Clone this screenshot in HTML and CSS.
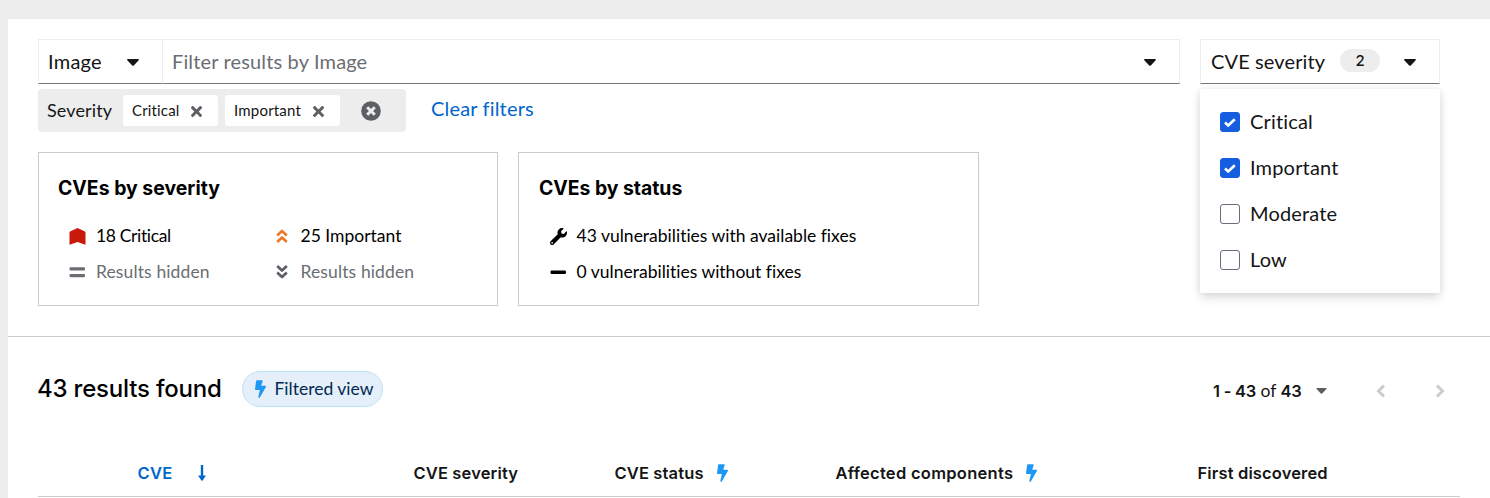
FILE: index.html
```html
<!DOCTYPE html>
<html lang="en">
<head>
<meta charset="utf-8">
<title>Vulnerability results</title>
<link rel="stylesheet" href="styles.css">
</head>
<body>
<svg class="defs" aria-hidden="true">
  <symbol id="caret" viewBox="0 0 12 7"><path d="M.9 0h10.2c.8 0 1.1.8.6 1.3L6.8 6.4c-.5.5-1.1.5-1.6 0L.3 1.3C-.2.8.1 0 .9 0z"/></symbol>
  <symbol id="times" viewBox="0 0 352 352"><path d="M243 176 343 76c12-12 12-32 0-44l-22-22c-12-12-32-12-44 0L176 109 76 10C64-3 44-3 32 10L9 32c-12 12-12 32 0 44l100 100L9 276c-12 12-12 32 0 44l23 23c12 12 32 12 44 0l100-100 101 100c12 12 32 12 44 0l22-23c12-12 12-32 0-44z"/></symbol>
  <symbol id="bolt" viewBox="0 0 320 512"><path d="M296 160H180.600l42.600-129.800C227.200 15 215.700 0 200 0H56C44 0 33.800 8.900 32.200 20.800l-32 240C-1.700 275.200 9.500 288 24 288h118.700L96.600 482.500c-3.600 15.200 8 29.500 23.300 29.500 8.400 0 16.400-4.400 20.800-12l176-304c9.300-15.900-2.200-36-20.700-36z"/></symbol>
  <symbol id="angles" viewBox="0 0 12 14"><path d="M1.200 6.500 6 2l4.800 4.500M1.200 12.900 6 8.400l4.800 4.500" fill="none" stroke="currentColor" stroke-width="2.700" stroke-linejoin="round"/></symbol>
  <symbol id="check" viewBox="0 0 12 9"><path d="m1 4.500 3.200 3 6.600-6.200" fill="none" stroke="currentColor" stroke-width="2.600"/></symbol>
</svg>
<main class="page">
  <section class="filters">
    <div class="toolbar">
      <div class="search">
        <div class="attribute"><span>Image</span><svg class="caret"><use href="#caret"/></svg></div>
        <div class="query"><span>Filter results by Image</span><svg class="caret"><use href="#caret"/></svg></div>
      </div>
      <div class="select">
        <span class="select-label">CVE severity</span><span class="badge">2</span><svg class="caret"><use href="#caret"/></svg>
        <div class="menu">
          <label class="option"><span class="box checked"><svg><use href="#check"/></svg></span><span class="option-text">Critical</span></label>
          <label class="option"><span class="box checked"><svg><use href="#check"/></svg></span><span class="option-text">Important</span></label>
          <label class="option"><span class="box"></span><span class="option-text">Moderate</span></label>
          <label class="option"><span class="box"></span><span class="option-text">Low</span></label>
        </div>
      </div>
    </div>
    <div class="applied">
      <div class="chip-group">
        <span class="group-label">Severity</span>
        <span class="chip chip-critical">Critical<svg><use href="#times"/></svg></span>
        <span class="chip chip-important">Important<svg><use href="#times"/></svg></span>
        <svg class="clear-group" viewBox="0 0 20 20"><circle cx="10" cy="10" r="9.800" fill="#5c5f63"/><path d="m6.200 6.200 7.600 7.600m0-7.600-7.600 7.600" stroke="#ededed" stroke-width="3"/></svg>
      </div>
      <a class="clear">Clear filters</a>
    </div>
    <div class="cards">
      <div class="card">
        <h2 class="card-title title-severity">CVEs by severity</h2>
        <div class="grid">
          <div class="item critical"><svg class="icon" viewBox="0 0 17 17"><path fill="#c9190b" d="M8.500 0 16 3.400q.5.300.5.900V16q0 .900-.900.600L8.500 13.900l-7.100 2.700q-.900.300-.900-.600V4.300q0-.600.500-.900z"/></svg><span>18 Critical</span></div>
          <div class="item"><svg class="icon angles orange"><use href="#angles"/></svg><span>25 Important</span></div>
          <div class="item muted"><svg class="icon" viewBox="0 0 17 17"><path fill="#6a6e73" d="M1.600 3.300h13.300q1.100 0 1.100 1.100v1q0 1.100-1.100 1.100H1.600Q.5 6.500.5 5.400v-1q0-1.100 1.100-1.100zm0 6.700h13.300q1.100 0 1.100 1.100v1q0 1.100-1.100 1.100H1.600q-1.100 0-1.100-1.100v-1q0-1.100 1.100-1.100z"/></svg><span>Results hidden</span></div>
          <div class="item muted"><svg class="icon angles down"><use href="#angles"/></svg><span>Results hidden</span></div>
        </div>
      </div>
      <div class="card card-status">
        <h2 class="card-title title-status">CVEs by status</h2>
        <div class="list">
          <div class="item"><svg class="icon" viewBox="0 0 512 512"><path d="M507.700 109.100c-2.200-9-13.500-12.100-20.100-5.500l-74.400 74.400-67.900-11.300L334 98.900l74.400-74.400c6.600-6.600 3.400-17.900-5.700-20.200-47.400-11.700-99.600.900-136.600 37.900-39.600 39.600-50.500 97.100-34.100 147.200L18.700 402.800c-25 25-25 65.500 0 90.500s65.500 25 90.500 0l213.200-213.200c50.100 16.700 107.500 5.700 147.400-34.200 37.100-37.100 49.700-89.300 37.900-136.800zM64 472c-13.300 0-24-10.700-24-24 0-13.300 10.700-24 24-24s24 10.700 24 24c0 13.300-10.700 24-24 24z"/></svg><span>43 vulnerabilities with available fixes</span></div>
          <div class="item"><svg class="icon" viewBox="0 0 17 17"><rect x=".5" y="6.500" width="15.500" height="3.400" rx="1.200"/></svg><span>0 vulnerabilities without fixes</span></div>
        </div>
      </div>
    </div>
  </section>
  <section class="results">
    <div class="results-bar">
      <h1 class="results-title">43 results found</h1>
      <span class="label"><svg class="bolt"><use href="#bolt"/></svg>Filtered view</span>
      <div class="pager">
        <span class="range"><b>1 - 43</b> of <b>43</b></span>
        <svg class="pager-caret"><use href="#caret"/></svg>
        <svg class="arrow" viewBox="0 0 10 14"><path d="M8 1.500 2.500 7 8 12.500"/></svg>
        <svg class="arrow" viewBox="0 0 10 14"><path d="M2 1.500 7.500 7 2 12.500"/></svg>
      </div>
    </div>
    <div class="thead">
      <div class="th sorted"><span>CVE</span><svg class="sort" viewBox="0 0 8 16"><path d="M4 0v12" stroke="currentColor" stroke-width="2.400"/><path d="M.6 10.500h6.800q.7 0 .2.600l-3 4.300q-.6.600-1.200 0l-3-4.300q-.500-.600.2-.600z" fill="currentColor"/></svg></div>
      <div class="th"><span>CVE severity</span></div>
      <div class="th"><span>CVE status</span><svg class="bolt"><use href="#bolt"/></svg></div>
      <div class="th th-wide"><span>Affected components</span><svg class="bolt"><use href="#bolt"/></svg></div>
      <div class="th"><span>First discovered</span></div>
    </div>
  </section>
</main>
</body>
</html>
```
FILE: styles.css
```css
* { box-sizing: border-box; }
body { margin: 0; padding: 19px 0 0 8px; height: 498px; overflow: hidden; background: #ededed; color: #151515; font: 400 20px/30px Lato, sans-serif; font-variant-ligatures: none; white-space: nowrap; }
h1, h2 { margin: 0; }
svg { display: block; flex: none; overflow: visible; }
.defs { position: absolute; width: 0; height: 0; }
.page { height: 479px; background: #fff; }
.filters { height: 318px; padding: 20px 50px 0 30px; border-bottom: 1px solid #c9cbcd; }
.toolbar { display: flex; justify-content: space-between; height: 45px; }
.search { display: flex; width: 1142px; }
.attribute, .query, .select { display: flex; align-items: center; border: 1px solid #ededed; border-bottom-color: #76797c; }
.attribute span, .query span, .select-label, .option-text { padding-bottom: 2px; }
.attribute { width: 125px; padding-left: 9px; gap: 25px; letter-spacing: .25px; }
.query { flex: 1; justify-content: space-between; padding: 0 23px 0 9px; border-left: 0; color: #6a6e73; letter-spacing: .15px; }
.caret { width: 12px; height: 7px; margin-top: 2px; fill: #151515; }
.select { position: relative; width: 240px; padding-left: 10px; }
.select-label { width: 115px; letter-spacing: .12px; }
.badge { width: 40px; height: 23px; margin: 0 24px 2px 14px; border-radius: 12px; background: #ededed; font: 500 15px/23px Inter, sans-serif; text-align: center; }
.menu { position: absolute; z-index: 1; top: 49px; left: -1px; width: 240px; height: 204px; padding: 10px 20px; background: #fff; box-shadow: 0 5px 10px rgba(3,3,3,.12), 0 0 7px rgba(3,3,3,.08); }
.option { display: flex; align-items: center; gap: 10px; height: 46px; letter-spacing: .17px; }
.box { display: flex; align-items: center; justify-content: center; width: 20px; height: 20px; border: 1px solid #686b7c; border-radius: 3px; background: #fff; }
.box.checked { border-color: #155ee0; background: #155ee0; color: #fff; }
.box svg { width: 12px; height: 9px; }
.applied { display: flex; gap: 25px; margin-top: 5px; }
.chip-group { display: flex; align-items: center; width: 368px; height: 43px; padding-left: 9px; border-radius: 4px; background: #ededed; }
.group-label { width: 76px; padding-bottom: 2px; font-size: 18px; letter-spacing: .12px; }
.chip { display: flex; align-items: center; justify-content: space-between; height: 31px; padding: 0 16px 2px 9px; border-radius: 3px; background: #fff; font-size: 15px; }
.chip svg { width: 11px; height: 11px; margin-top: 3px; fill: #5c5f63; }
.chip-critical { width: 95px; margin-right: 7px; letter-spacing: .16px; }
.chip-important { width: 115px; letter-spacing: .2px; }
.clear-group { width: 20px; height: 20px; margin-left: 21px; }
.clear { padding-top: 4px; color: #0066cc; letter-spacing: .17px; }
.cards { display: flex; gap: 20px; margin-top: 20px; }
.card { width: 460px; height: 154px; padding: 19px 20px 0 19px; border: 1px solid #c9cbcd; color: #000; }
.card-status { width: 461px; padding-left: 20px; }
.card-title { font: 700 19.400px/32px Inter, sans-serif; }
.title-severity { letter-spacing: .02px; }
.title-status { letter-spacing: -.02px; }
.grid { display: grid; grid-template-columns: 204.500px 1fr; padding: 14px 0 0 11px; }
.list { padding: 14px 0 0 10.600px; }
.item { display: flex; align-items: center; gap: 10px; height: 36px; font-size: 17.500px; }
.critical { letter-spacing: -.35px; }
.muted { color: #6a6e73; letter-spacing: .12px; }
.icon { width: 17px; height: 17px; }
.angles { width: 12px; height: 14px; margin: 0 3px 0 2px; color: #5c5f63; }
.orange { color: #ec7a2c; }
.down { transform: scaleY(-1); }
.results { padding: 0 30px; }
.results-bar { display: flex; align-items: center; height: 104px; }
.results-title { width: 205px; margin-left: -1px; font: 500 24px/36px Inter, sans-serif; letter-spacing: -.2px; color: #000; }
.label { display: flex; align-items: center; gap: 8.500px; width: 141px; height: 36px; padding-left: 12px; border: 1px solid #bee1f4; border-radius: 18px; background: #e4eff9; color: #002952; font-size: 17.500px; }
.bolt { width: 11px; height: 18px; fill: #1f97f4; }
.pager { display: flex; align-items: center; height: 30px; margin: 3px 15.500px 0 auto; font-size: 17.500px; }
.range b { font: 600 16.500px Inter, sans-serif; letter-spacing: -.25px; }
.pager-caret { width: 11px; height: 6px; margin: 0 49px 0 14px; fill: #5c5f63; }
.arrow { width: 10px; height: 14px; fill: none; stroke: #c9cbcd; stroke-width: 3; }
.arrow + .arrow { margin-left: 49px; }
.thead { display: grid; grid-template-columns: 276px 201px 221px 362px 1fr; height: 56px; padding-left: 99.500px; border-bottom: 1px solid #c9cbcd; font: 600 16.500px/24px Inter, sans-serif; letter-spacing: .14px; }
.th { display: flex; align-items: center; gap: 13px; padding-top: 9px; }
.th-wide { letter-spacing: .28px; }
.sorted { gap: 25.500px; letter-spacing: .3px; color: #0066cc; }
.sort { width: 8px; height: 16px; }
```
